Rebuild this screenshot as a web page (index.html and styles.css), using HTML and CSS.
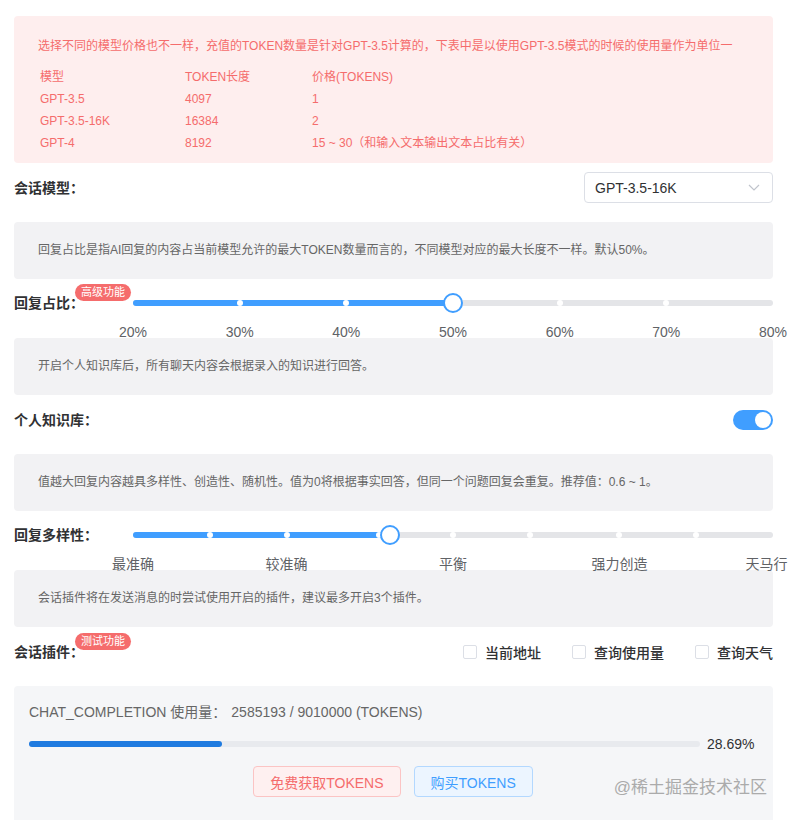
FILE: index.html
```html
<!DOCTYPE html>
<html lang="zh-CN">
<head>
    <meta charset="utf-8">
    <title>会话设置</title>
    <link rel="stylesheet" href="styles.css">
</head>
<body>
<div class="page">

    <div class="alert alert-error">
        <p>选择不同的模型价格也不一样，充值的TOKEN数量是针对GPT-3.5计算的，下表中是以使用GPT-3.5模式的时候的使用量作为单位一</p>
        <table class="price-table">
            <tr><td>模型</td><td>TOKEN长度</td><td>价格(TOKENS)</td></tr>
            <tr><td>GPT-3.5</td><td>4097</td><td>1</td></tr>
            <tr><td>GPT-3.5-16K</td><td>16384</td><td>2</td></tr>
            <tr><td>GPT-4</td><td>8192</td><td>15 ~ 30（和输入文本输出文本占比有关）</td></tr>
        </table>
    </div>

    <div class="field field-model">
        <span class="field-label">会话模型：</span>
        <div class="select">
            <span>GPT-3.5-16K</span>
            <svg width="12" height="7" viewBox="0 0 12 7"><path d="M1 1l5 5 5-5" fill="none" stroke="#c0c4cc" stroke-width="1.2"/></svg>
        </div>
    </div>

    <div class="alert alert-info">回复占比是指AI回复的内容占当前模型允许的最大TOKEN数量而言的，不同模型对应的最大长度不一样。默认50%。</div>

    <div class="field field-slider">
        <span class="field-label">回复占比：<span class="badge">高级功能</span></span>
        <div class="slider">
            <div class="slider-track">
                <div class="slider-fill" style="width:50%"></div>
                <span class="slider-stop" style="left:16.67%"></span>
                <span class="slider-stop" style="left:33.33%"></span>
                <span class="slider-stop" style="left:66.67%"></span>
                <span class="slider-stop" style="left:83.33%"></span>
                <span class="slider-handle" style="left:50%"></span>
            </div>
            <div class="slider-marks">
                <span style="left:0%">20%</span>
                <span style="left:16.67%">30%</span>
                <span style="left:33.33%">40%</span>
                <span style="left:50%">50%</span>
                <span style="left:66.67%">60%</span>
                <span style="left:83.33%">70%</span>
                <span style="left:100%">80%</span>
            </div>
        </div>
    </div>

    <div class="alert alert-info">开启个人知识库后，所有聊天内容会根据录入的知识进行回答。</div>

    <div class="field field-switch">
        <span class="field-label">个人知识库：</span>
        <span class="switch"><span class="switch-knob"></span></span>
    </div>

    <div class="alert alert-info">值越大回复内容越具多样性、创造性、随机性。值为0将根据事实回答，但同一个问题回复会重复。推荐值：0.6 ~ 1。</div>

    <div class="field field-slider">
        <span class="field-label">回复多样性：</span>
        <div class="slider">
            <div class="slider-track">
                <div class="slider-fill" style="width:40.2%"></div>
                <span class="slider-stop" style="left:12%"></span>
                <span class="slider-stop" style="left:24%"></span>
                <span class="slider-stop" style="left:38.5%"></span>
                <span class="slider-stop" style="left:50%"></span>
                <span class="slider-stop" style="left:62%"></span>
                <span class="slider-stop" style="left:76%"></span>
                <span class="slider-stop" style="left:88%"></span>
                <span class="slider-handle" style="left:40.2%"></span>
            </div>
            <div class="slider-marks">
                <span style="left:0%">最准确</span>
                <span style="left:24%">较准确</span>
                <span style="left:50%">平衡</span>
                <span style="left:76%">强力创造</span>
                <span style="left:99%">天马行</span>
            </div>
        </div>
    </div>

    <div class="alert alert-info">会话插件将在发送消息的时尝试使用开启的插件，建议最多开启3个插件。</div>

    <div class="field field-plugins">
        <span class="field-label">会话插件：<span class="badge">测试功能</span></span>
        <div class="checks">
            <label class="check"><span class="check-box"></span>当前地址</label>
            <label class="check"><span class="check-box"></span>查询使用量</label>
            <label class="check"><span class="check-box"></span>查询天气</label>
        </div>
    </div>

    <div class="usage">
        <div class="usage-title">CHAT_COMPLETION 使用量：<span class="usage-num">2585193 / 9010000 (TOKENS)</span></div>
        <div class="progress">
            <div class="progress-bar"><div class="progress-fill" style="width:28.69%"></div></div>
            <span class="progress-text">28.69%</span>
        </div>
        <div class="actions">
            <button class="btn btn-red">免费获取TOKENS</button>
            <button class="btn btn-blue">购买TOKENS</button>
        </div>
        <span class="watermark">@稀土掘金技术社区</span>
    </div>

</div>
</body>
</html>
```

FILE: styles.css
```css
body {
    margin: 0;
    background: white;
    font-family: "Liberation Sans", "Noto Sans CJK SC", sans-serif;
    color: #303133;
}
.page {
    padding: 16px 15px 0 14px;
}
.alert {
    border-radius: 4px;
    font-size: 12px;
    line-height: 20px;
}
.alert-error {
    background: #feeeee;
    color: #f56c6c;
    padding: 20px 24px 9px;
}
.alert-error p {
    margin: 0 0 10px;
}
.price-table {
    border-collapse: collapse;
    margin-left: 2px;
}
.price-table td {
    padding: 0;
    line-height: 22px;
}
.price-table td:nth-child(1) {
    width: 145px;
}
.price-table td:nth-child(2) {
    width: 127px;
}
.alert-info {
    background: #f2f2f4;
    color: #666;
    padding: 18px 24px 19px;
}
.field {
    display: flex;
    height: 59px;
    box-sizing: border-box;
}
.field-label {
    position: relative;
    flex-shrink: 0;
    width: 119px;
    font-size: 14px;
    font-weight: bold;
    line-height: 20px;
}
.badge {
    position: absolute;
    left: 61px;
    top: -9px;
    height: 17px;
    padding: 0 6px;
    border-radius: 9px;
    background: #f56c6c;
    color: white;
    font-size: 11px;
    font-weight: normal;
    line-height: 17px;
    white-space: nowrap;
}
.field-model {
    align-items: center;
    justify-content: space-between;
    padding-bottom: 10px;
}
.select {
    width: 189px;
    height: 31px;
    box-sizing: border-box;
    border: 1px solid #dcdfe6;
    border-radius: 4px;
    padding: 0 12px 0 10px;
    display: flex;
    align-items: center;
    justify-content: space-between;
    font-size: 14px;
    color: #303133;
}
.field-slider .field-label {
    margin-top: 14px;
}
.slider {
    flex: 1;
    padding-top: 21px;
}
.slider-track {
    position: relative;
    height: 6px;
    border-radius: 3px;
    background: #e4e5e8;
}
.slider-fill {
    height: 6px;
    border-radius: 3px;
    background: #409eff;
}
.slider-stop {
    position: absolute;
    top: 0;
    width: 6px;
    height: 6px;
    margin-left: -3px;
    border-radius: 50%;
    background: white;
}
.slider-handle {
    position: absolute;
    top: 50%;
    width: 20px;
    height: 20px;
    box-sizing: border-box;
    border: 2px solid #409eff;
    border-radius: 50%;
    background: white;
    transform: translate(-50%, -50%);
}
.slider-marks {
    position: relative;
    height: 16px;
    margin-top: 18px;
}
.slider-marks span {
    position: absolute;
    top: 0;
    transform: translateX(-50%);
    font-size: 14px;
    line-height: 16px;
    color: #606266;
    white-space: nowrap;
}
.field-switch {
    justify-content: space-between;
    padding-top: 15px;
}
.switch {
    position: relative;
    width: 40px;
    height: 20px;
    border-radius: 10px;
    background: #409eff;
}
.switch-knob {
    position: absolute;
    right: 2px;
    top: 2px;
    width: 16px;
    height: 16px;
    border-radius: 50%;
    background: white;
}
.field-plugins {
    justify-content: space-between;
    padding-top: 15px;
}
.checks {
    display: flex;
    height: 20px;
    align-items: center;
}
.check {
    display: flex;
    align-items: center;
    margin-left: 31px;
    font-size: 14px;
    font-weight: 500;
    color: #303133;
}
.check-box {
    width: 14px;
    height: 14px;
    box-sizing: border-box;
    border: 1px solid #dcdfe6;
    border-radius: 2px;
    margin-right: 8px;
    background: white;
}
.usage {
    position: relative;
    background: #f5f6f8;
    border-radius: 4px 4px 0 0;
    padding: 16px 16px 30px 15px;
}
.usage-title {
    font-size: 14px;
    line-height: 20px;
    color: #666;
}
.usage-num {
    margin-left: 5px;
}
.progress {
    display: flex;
    align-items: center;
    height: 20px;
    margin-top: 12px;
}
.progress-bar {
    flex: 1;
    height: 6px;
    border-radius: 3px;
    background: #e8eaee;
    margin-right: 7px;
}
.progress-fill {
    height: 6px;
    border-radius: 3px;
    background: #1f7be0;
}
.progress-text {
    width: 50px;
    font-size: 14px;
    color: #303133;
}
.actions {
    display: flex;
    justify-content: center;
    gap: 13px;
    margin-top: 12px;
}
.btn {
    height: 31px;
    padding: 0 16px;
    border-radius: 4px;
    font-family: inherit;
    font-size: 14px;
    cursor: pointer;
}
.btn-red {
    background: #fef0f0;
    border: 1px solid #fbc4c4;
    color: #f56c6c;
}
.btn-blue {
    background: #ecf5ff;
    border: 1px solid #b3d8ff;
    color: #409eff;
}
.watermark {
    position: absolute;
    right: 6px;
    top: 91px;
    font-size: 17px;
    line-height: 22px;
    color: #ababab;
}
```
